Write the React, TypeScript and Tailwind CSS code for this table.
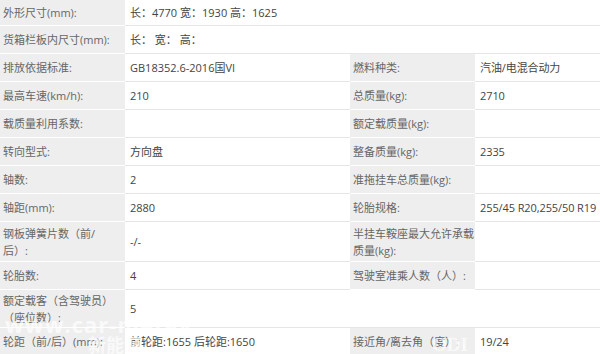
import React from "react";

const font = {
  fontFamily: '"Open Sans", "Noto Sans CJK SC", sans-serif',
};

type Row = {
  h: string;
  l1: React.ReactNode;
  v1: React.ReactNode;
  l2?: React.ReactNode;
  v2?: React.ReactNode;
  full?: boolean;
  blankRight?: boolean;
};

const rows: Row[] = [
  { h: "h-[27px]", l1: "外形尺寸(mm):", v1: "长：4770 宽：1930 高：1625", full: true },
  { h: "h-[28px]", l1: "货箱栏板内尺寸(mm):", v1: "长： 宽： 高：", full: true },
  { h: "h-[28px]", l1: "排放依据标准:", v1: "GB18352.6-2016国VI", l2: "燃料种类:", v2: "汽油/电混合动力" },
  { h: "h-[28px]", l1: "最高车速(km/h):", v1: "210", l2: "总质量(kg):", v2: "2710" },
  { h: "h-[28px]", l1: "载质量利用系数:", v1: "", l2: "额定载质量(kg):", v2: "" },
  { h: "h-[28px]", l1: "转向型式:", v1: "方向盘", l2: "整备质量(kg):", v2: "2335" },
  { h: "h-[28px]", l1: "轴数:", v1: "2", l2: "准拖挂车总质量(kg):", v2: "" },
  { h: "h-[28px]", l1: "轴距(mm):", v1: "2880", l2: "轮胎规格:", v2: "255/45 R20,255/50 R19" },
  {
    h: "h-[40px]",
    l1: (
      <>
        钢板弹簧片数（前/
        <br />
        后）:
      </>
    ),
    v1: "-/-",
    l2: (
      <>
        半挂车鞍座最大允许承载
        <br />
        质量(kg):
      </>
    ),
    v2: "",
  },
  { h: "h-[28px]", l1: "轮胎数:", v1: "4", l2: "驾驶室准乘人数（人）:", v2: "" },
  {
    h: "h-[38px]",
    l1: (
      <>
        额定载客（含驾驶员）
        <br />
        （座位数）:
      </>
    ),
    v1: "5",
    blankRight: true,
  },
  { h: "h-[28px]", l1: "轮距（前/后）(mm):", v1: "前轮距:1655 后轮距:1650", l2: "接近角/离去角（度）:", v2: "19/24" },
];

export default function App() {
  return (
    <div
      className="relative w-[600px] h-[354px] overflow-hidden bg-white text-[11px] leading-[17px]"
      style={font}
    >
      <div className="-mt-[1px] flex flex-col">
        {rows.map((r, i) => (
          <div key={i} className={`flex ${r.h}`}>
            <div className="w-[125px] shrink-0 bg-[#eeeeee] border-b border-b-white pl-[3px] flex items-center text-[#666] whitespace-nowrap">
              <div>{r.l1}</div>
            </div>
            {r.full ? (
              <div className="flex-1 border-b border-b-[#e6e6e6] pl-[5px] flex items-center text-[#444] whitespace-nowrap">
                {r.v1}
              </div>
            ) : (
              <>
                <div className="w-[225px] shrink-0 border-b border-b-[#e6e6e6] pl-[5px] flex items-center text-[#444] whitespace-nowrap">
                  {r.v1}
                </div>
                {r.blankRight ? (
                  <div className="flex-1 border-b border-b-[#e6e6e6]" />
                ) : (
                  <>
                    <div className="w-[125px] shrink-0 bg-[#eeeeee] border-b border-b-white pl-[3px] flex items-center text-[#666] whitespace-nowrap">
                      <div>{r.l2}</div>
                    </div>
                    <div className="flex-1 border-b border-b-[#e6e6e6] pl-[5px] flex items-center text-[#444] whitespace-nowrap tracking-[-0.1px]">
                      {r.v2}
                    </div>
                  </>
                )}
              </>
            )}
          </div>
        ))}
      </div>
      <div className="pointer-events-none absolute left-[5px] top-[312px] text-[22px] leading-[24px] font-bold text-white/70 tracking-[1px]">
        www.car-metav
      </div>
      <div className="pointer-events-none absolute left-[88px] top-[335px] text-[18px] leading-[20px] font-bold text-white/70">
        新能源
      </div>
      <div
        className="pointer-events-none absolute left-[432px] top-[334px] text-[19px] leading-[22px] font-bold text-white/70"
        style={{ fontFamily: '"Liberation Serif", serif' }}
      >
        ODI
      </div>
    </div>
  );
}
